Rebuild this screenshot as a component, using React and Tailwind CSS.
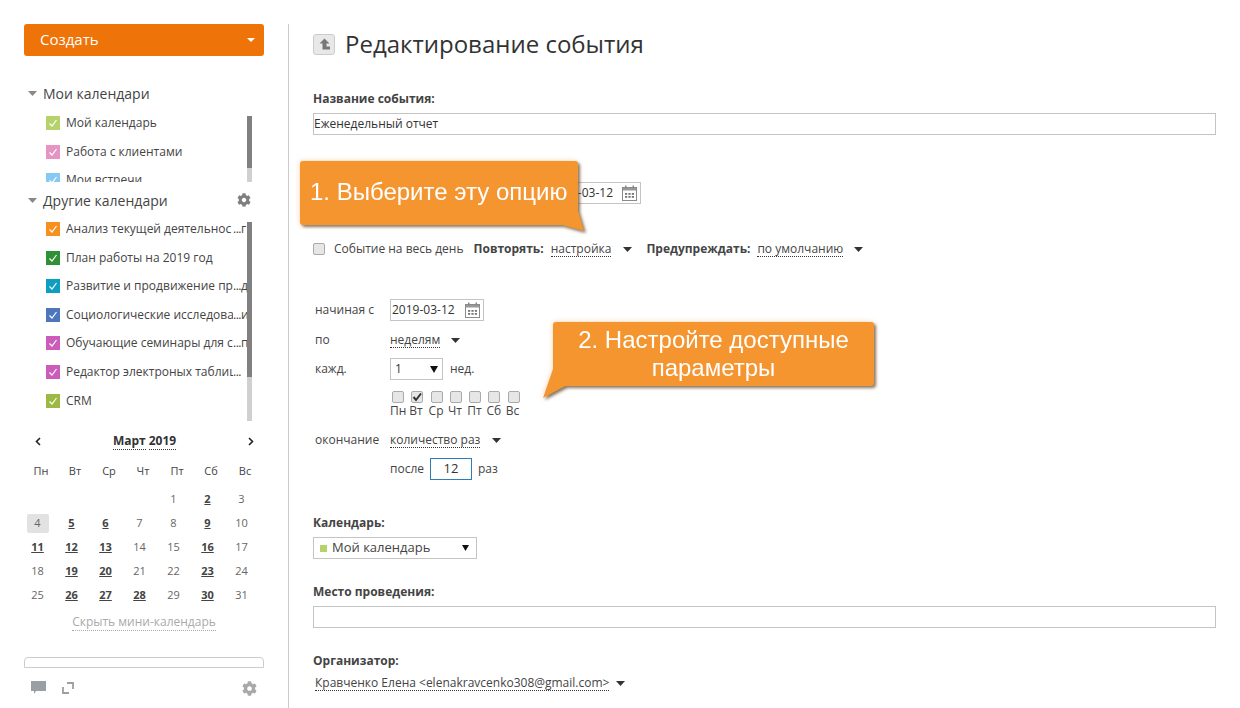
import React from "react";
import { FaCog } from "react-icons/fa";

const font = "font-['Open_Sans',sans-serif]";

function Check({ color }) {
  return (
    <span className="w-[14px] h-[14px] shrink-0 flex items-center justify-center" style={{ background: color }}>
      <svg width="10" height="10" viewBox="0 0 10 10"><path d="M1.5 5.5 L4 8 L8.5 2" fill="none" stroke="#fff" strokeWidth="1.2" /></svg>
    </span>
  );
}

function Tri({ className = "" }) {
  return (
    <svg width="9" height="5" viewBox="0 0 9 5" className={"shrink-0 " + className}><path d="M0 0 H9 L4.5 5 Z" fill="#333" /></svg>
  );
}

function SideTri() {
  return (
    <svg width="9" height="5" viewBox="0 0 9 5" className="shrink-0"><path d="M0 0 H9 L4.5 5 Z" fill="#888" /></svg>
  );
}

function Cal({ className = "" }) {
  return (
    <svg width="15" height="16" viewBox="0 0 15 16" className={"shrink-0 " + className}>
      <rect x="0.5" y="2.5" width="14" height="13" fill="#fff" stroke="#8a8a8a" />
      <rect x="1" y="3" width="13" height="2.5" fill="#999" />
      <rect x="3" y="0.5" width="1.5" height="3" fill="#8a8a8a" />
      <rect x="10.5" y="0.5" width="1.5" height="3" fill="#8a8a8a" />
      <g fill="#777">
        <rect x="3" y="8" width="2.2" height="1.8" /><rect x="6.4" y="8" width="2.2" height="1.8" /><rect x="9.8" y="8" width="2.2" height="1.8" />
        <rect x="3" y="11" width="2.2" height="1.8" /><rect x="6.4" y="11" width="2.2" height="1.8" /><rect x="9.8" y="11" width="2.2" height="1.8" />
      </g>
    </svg>
  );
}

function Box({ checked }) {
  return (
    <span className="w-[12px] h-[12px] rounded-[2px] border border-[#aaa] bg-[#e6e6e6] flex items-center justify-center shrink-0">
      {checked && <svg width="10" height="10" viewBox="0 0 10 10"><path d="M1.5 5 L4 8 L9 1.5" fill="none" stroke="#333" strokeWidth="2" /></svg>}
    </span>
  );
}

const Dot = ({ className = "", children }) => (
  <span className={"border-b border-dotted border-[#333] leading-[15px] " + className}>{children}</span>
);

const Label = ({ children, className = "" }) => (
  <div className={"text-[12px] font-bold leading-[16px] text-[#444] " + className}>{children}</div>
);

const mine = [["#b5d36a", "Мой календарь"], ["#e695c3", "Работа с клиентами"], ["#85c9f5", "Мои встречи"]];
const others = [
  ["#f7901e", "Анализ текущей деятельнос", "г"],
  ["#2f9135", "План работы на 2019 год"],
  ["#0d9fc0", "Развитие и продвижение пр", "д"],
  ["#4e76bf", "Социологические исследова", "и"],
  ["#cb5cbc", "Обучающие семинары для с", "п"],
  ["#cb5cbc", "Редактор электроных таблиц", ""],
  ["#9cb944", "CRM"],
];

function CalRow({ color, text, tail }) {
  return (
    <div className="h-[28.6px] flex items-start gap-[6px] shrink-0">
      <Check color={color} />
      <span className="flex text-[12px] leading-[14px] w-[181px] whitespace-nowrap overflow-hidden text-[#444]">
        {tail === undefined ? text : (
          <>
            <span className="w-[167px] overflow-hidden shrink-0">{text}</span>
            <span className="tracking-[-0.5px]">...</span>
            <span>{tail}</span>
          </>
        )}
      </span>
    </div>
  );
}

function Scrollbar({ thumb, h }) {
  return (
    <div className="w-[5px] bg-[#d0d0d0] shrink-0" style={{ height: h }}>
      <div className="w-full bg-[#808080]" style={{ height: thumb }} />
    </div>
  );
}

const dayNames = ["Пн", "Вт", "Ср", "Чт", "Пт", "Сб", "Вс"];
const bold = new Set([2, 5, 6, 9, 11, 12, 13, 16, 19, 20, 23, 26, 27, 28, 30]);
const cells = [null, null, null, null, ...Array.from({ length: 31 }, (_, i) => i + 1)];

function Sidebar() {
  return (
    <aside className="w-[289px] h-[684px] shrink-0 border-r border-[#ccc] pr-[24px] pl-[24px] flex flex-col overflow-hidden">
      <div className="h-[32px] w-[240px] shrink-0 rounded-[3px] bg-[#ee7309] text-white text-[15px] pl-[16px] pr-[9px] pb-[2px] flex items-center justify-between">
        <span>Создать</span>
        <svg width="8" height="4" viewBox="0 0 8 4" className="mt-[2px]"><path d="M0 0 H8 L4 4 Z" fill="#fff" /></svg>
      </div>
      <div className="mt-[27px] h-[20px] flex items-center gap-[6px] pl-[4px] text-[14px] text-[#444] shrink-0">
        <SideTri /><span>Мои календари</span>
      </div>
      <div className="mt-[13px] h-[66px] flex pl-[22px] overflow-hidden shrink-0">
        <div className="w-[201px] h-[66px] overflow-hidden">
          {mine.map(([c, t]) => <CalRow key={t} color={c} text={t} />)}
        </div>
        <Scrollbar h={66} thumb={52} />
      </div>
      <div className="mt-[8px] h-[20px] flex items-center pl-[4px] pr-[13px] text-[14px] text-[#444] shrink-0">
        <SideTri /><span className="ml-[6px]">Другие календари</span>
        <FaCog className="ml-auto text-[#808080] text-[14px]" />
      </div>
      <div className="mt-[12px] h-[199px] flex pl-[22px] shrink-0">
        <div className="w-[201px]">
          {others.map(([c, t, e]) => <CalRow key={t} color={c} text={t} tail={e} />)}
        </div>
        <Scrollbar h={199} thumb={155} />
      </div>
      <div className="mt-[10px] h-[20px] flex items-center justify-between pl-[11px] pr-[10px] shrink-0">
        <svg width="6" height="9" viewBox="0 0 6 9"><path d="M5 1 L1.5 4.5 L5 8" fill="none" stroke="#222" strokeWidth="1.6" /></svg>
        <span className="text-[12px] font-bold text-[#333] flex gap-[3px] leading-[17px]">
          <span className="border-b border-dotted border-[#333]">Март</span>
          <span className="border-b border-dotted border-[#333]">2019</span>
        </span>
        <svg width="6" height="9" viewBox="0 0 6 9"><path d="M1 1 L4.5 4.5 L1 8" fill="none" stroke="#222" strokeWidth="1.6" /></svg>
      </div>
      <div className="-ml-[3px] w-[238px] grid grid-cols-[repeat(7,34px)] mt-[10px] h-[20px] shrink-0">
        {dayNames.map((d) => <div key={d} className="text-[11px] leading-[20px] text-center pl-[6px] text-[#444]">{d}</div>)}
      </div>
      <div className="-ml-[3px] mt-[6px] w-[238px] grid grid-cols-[repeat(7,34px)] auto-rows-[24px] shrink-0">
        {cells.map((n, i) => (
          <div key={i} className="flex items-center justify-center pr-[1px]">
            {n && (
              <span className={
                "text-[11px] h-[19px] w-[22px] flex items-center justify-center rounded-[2px] " +
                (n === 4 ? "bg-[#e2e2e2] text-[#444] " : "") +
                (bold.has(n) ? "font-bold underline text-[#444]" : "text-[#666]")
              }>{n}</span>
            )}
          </div>
        ))}
      </div>
      <div className="mt-[7px] text-center text-[12px] leading-[16px] shrink-0">
        <span className="text-[#aaa] border-b border-dotted border-[#aaa]">Скрыть мини-календарь</span>
      </div>
      <div className="mt-[27px] h-[11px] border border-[#ccc] rounded-t-[4px] shrink-0" />
      <div className="mt-[12px] flex items-center pl-[7px] pr-[7px] h-[16px] shrink-0 relative">
        <svg width="15" height="14" viewBox="0 0 15 14"><path d="M0 0 H15 V10 H5 L3 13 V10 H0 Z" fill="#9a9fa3" /></svg>
        <svg width="12" height="12" viewBox="0 0 12 12" className="ml-[16px]"><path d="M5 1 H11 V7 M1 5 V11 H7" fill="none" stroke="#9a9fa3" strokeWidth="1.8" /></svg>
        <FaCog className="ml-auto text-[#a9a9a9] text-[15px]" />
      </div>
    </aside>
  );
}

function Callout({ className, tail, children, inner }) {
  return (
    <div className={"absolute [filter:drop-shadow(2px_2px_1.5px_rgba(70,55,30,0.65))_drop-shadow(-1px_-1px_2px_rgba(245,170,90,0.35))] " + className}>
      {tail}
      <div className={"relative bg-[#f49530] rounded-[3px] text-white font-['Liberation_Sans',sans-serif] " + inner}>{children}</div>
    </div>
  );
}

function Main() {
  return (
    <main className="flex-1 pl-[24px] pr-[24px] relative text-[12px] text-[#444]">
      <div className="flex items-center h-[42px] -mt-[1px]">
        <span className="w-[22px] h-[21px] rounded-[3px] border border-[#ccc] bg-[#e8e8e8] flex items-center justify-center">
          <svg width="13" height="14" viewBox="0 0 13 14"><path d="M6.5 1.5 L11.5 6.5 H8.5 V9.5 H12 V12.5 H4.5 V6.5 H1.5 Z" fill="#777" /></svg>
        </span>
        <h1 className="ml-[10px] text-[24px] leading-[30px] text-[#333]">Редактирование события</h1>
      </div>
      <Label className="mt-[26px]">Название события:</Label>
      <div className="mt-[6px] h-[22px] border border-[#c4c4c4] flex items-center pl-[0px] text-[12px] text-[#333] w-[903px]">Еженедельный отчет</div>

      <div className="mt-[47px] h-[22px] flex">
        <div className="w-[328px] h-[22px] border border-[#c4c4c4] flex items-center justify-end pr-[3px] text-[#333] gap-[9px]">
          <span>2019-03-12</span><Cal />
        </div>
      </div>

      <div className="mt-[36px] flex items-center h-[18px] whitespace-nowrap">
        <Box />
        <span className="ml-[9px]">Событие на весь день</span>
        <span className="ml-[10px] font-bold">Повторять:</span>
        <Dot className="ml-[7px]">настройка</Dot>
        <Tri className="ml-[12px]" />
        <span className="ml-[14px] font-bold">Предупреждать:</span>
        <Dot className="ml-[7px]">по умолчанию</Dot>
        <Tri className="ml-[11px]" />
      </div>

      <div className="mt-[41px] pl-[2px]">
        <div className="flex items-center h-[22px]">
          <span className="w-[75px]">начиная с</span>
          <div className="w-[94px] h-[22px] border border-[#c4c4c4] flex items-center pl-[1px] pr-[3px] justify-between text-[#333]">
            <span>2019-03-12</span><Cal />
          </div>
        </div>
        <div className="flex items-center h-[18px] mt-[10px]">
          <span className="w-[75px]">по</span>
          <Dot>неделям</Dot><Tri className="ml-[11px]" />
        </div>
        <div className="flex items-center h-[22px] mt-[9px]">
          <span className="w-[75px]">кажд.</span>
          <div className="w-[53px] h-[22px] border border-[#c4c4c4] flex items-center justify-between pl-[4px] pr-[4px] text-[#333]">
            <span>1</span>
            <svg width="8" height="7" viewBox="0 0 8 7"><path d="M0 0 H8 L4 7 Z" fill="#111" /></svg>
          </div>
          <span className="ml-[7px]">нед.</span>
        </div>
        <div className="ml-[75px] mt-[11px] grid grid-cols-[repeat(7,19.3px)] text-[12px] leading-[14px]">
          {dayNames.map((d, i) => (
            <div key={d} className="flex flex-col items-start">
              <span className="ml-[2px]"><Box checked={i === 1} /></span>
              <span className="mt-[1px]">{d}</span>
            </div>
          ))}
        </div>
        <div className="flex items-center h-[18px] mt-[13px]">
          <span className="w-[75px]">окончание</span>
          <Dot>количество раз</Dot><Tri className="ml-[12px]" />
        </div>
        <div className="flex items-center h-[22px] mt-[9px] pl-[75px]">
          <span>после</span>
          <div className="ml-[6px] w-[42px] h-[22px] border border-[#2f7db8] flex items-center justify-center text-[13px] text-[#333]">12</div>
          <span className="ml-[6px]">раз</span>
        </div>
      </div>

      <Label className="mt-[35px]">Календарь:</Label>
      <div className="mt-[6px] w-[164px] h-[22px] border border-[#c4c4c4] flex items-center pl-[6px] pr-[7px] text-[13px] text-[#444]">
        <span className="w-[7px] h-[7px] bg-[#b5d36a]" />
        <span className="ml-[5px]">Мой календарь</span>
        <svg width="7" height="6" viewBox="0 0 7 6" className="ml-auto"><path d="M0 0 H7 L3.5 6 Z" fill="#111" /></svg>
      </div>

      <Label className="mt-[25px]">Место проведения:</Label>
      <div className="mt-[6px] h-[22px] border border-[#c4c4c4] w-[903px]" />

      <Label className="mt-[25px]">Организатор:</Label>
      <div className="mt-[6px] flex items-center h-[16px] pl-[2px]">
        <Dot>Кравченко Елена &lt;elenakravcenko308@gmail.com&gt;</Dot>
        <Tri className="ml-[7px]" />
      </div>

      <Callout
        className="left-[11px] top-[137px] w-[278px] h-[65px]"
        inner="h-[64px] text-[24px] pb-[2px] flex items-center pl-[10px] whitespace-nowrap"
        tail={<svg width="24" height="24" viewBox="0 0 24 24" className="absolute left-[262px] top-[50px]"><path d="M0 14 L16 0 L22 20 Z" fill="#f49530" /></svg>}
      >1. Выберите эту опцию</Callout>

      <Callout
        className="left-[264px] top-[298px] w-[321px] h-[64px]"
        inner="h-[64px] text-[24px] leading-[28px] flex items-center justify-center text-center"
        tail={<svg width="26" height="30" viewBox="0 0 26 30" className="absolute left-[-10px] top-[47px]"><path d="M10 0 L0 29 L26 15 Z" fill="#f49530" /></svg>}
      >2. Настройте доступные<br />параметры</Callout>
    </main>
  );
}

export default function App() {
  return (
    <div className={"w-[1240px] h-[708px] overflow-hidden bg-white flex items-start pt-[24px] text-[#444] " + font}>
      <Sidebar />
      <Main />
    </div>
  );
}
